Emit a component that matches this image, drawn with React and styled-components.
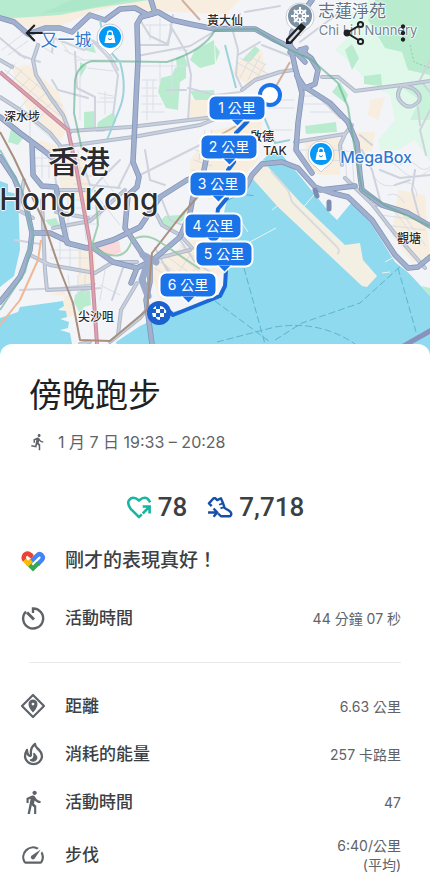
import styled, { createGlobalStyle } from "styled-components";
import {
    MdArrowBack,
    MdDirectionsRun,
    MdDirectionsWalk,
    MdMoreVert,
    MdOutlineSpeed
} from "react-icons/md";

const GlobalStyle = createGlobalStyle`
    * {
        box-sizing: border-box;
    }

    body {
        margin: 0;
        background: #fff;
        color: #202124;
        font-family: Inter, "Noto Sans CJK TC", sans-serif;
    }

    h1, p, dl, dd {
        margin: 0;
    }
`;

/* ---------- map ---------- */

const MapArea = styled.header`
    position: relative;
    width: 100%;
    aspect-ratio: 430 / 360;
    overflow: hidden;
    background: #f3f4f7;
`;

const MapSvg = styled.svg`
    display: block;
    width: 100%;
    height: 100%;
`;

const Pin = styled.div`
    position: absolute;
    left: ${props => props.$x / 4.3}%;
    top: ${props => props.$y / 3.6}%;
    transform: translate(-50%, -50%);
    white-space: nowrap;
`;

const PlaceName = styled(Pin)`
    font-size: ${props => props.$size || 12}px;
    line-height: 1;
    font-weight: ${props => props.$weight || 500};
    color: ${props => props.$color || "#2b2c30"};
    text-shadow: 1px 0 1px #fff, -1px 0 1px #fff, 0 1px 1px #fff, 0 -1px 1px #fff;
`;

const KmBadge = styled(Pin)`
    width: 59px;
    height: 27px;
    border: 2px solid #fff;
    border-radius: 8px;
    background: #1a73e8;
    color: #fff;
    font-size: 14px;
    line-height: 22px;
    text-align: center;

    &::after {
        content: "";
        position: absolute;
        left: 50%;
        top: 100%;
        transform: translateX(-50%);
        border: 6px solid transparent;
        border-top-color: #1a73e8;
        border-bottom: 0;
    }

    &::before {
        content: "";
        position: absolute;
        left: 50%;
        top: 100%;
        transform: translateX(-50%);
        border: 8px solid transparent;
        border-top-color: #fff;
        border-bottom: 0;
    }
`;

const AppBar = styled.nav`
    position: absolute;
    top: 0;
    left: 0;
    right: 0;
    display: flex;
    align-items: center;
    gap: 24px;
    height: 66px;
    padding: 0 13px 0 20px;
`;

const IconButton = styled.button`
    display: flex;
    align-items: center;
    justify-content: center;
    width: 28px;
    height: 28px;
    padding: 0;
    border: 0;
    background: none;
    color: #202124;
    font-size: 26px;
    cursor: pointer;

    &:first-child {
        margin-right: auto;
    }
`;

const highways = [
    "M0 18L14 22L28 34L45 28L60 28L72 32L90 15L105 20L120 9L135 8L148 15L158 12L172 20L190 24L215 29L255 29L275 40L292 48L305 62",
    "M151 0L155 13L141 17L137 24L138 60L136 100L133 162L139 177L137 187L128 195L125 228L143 255L150 265L150 282L146 300L152 344",
    "M312 0L303 12L292 32L290 43L295 67L302 93L298 123L296 150L312 173",
    "M300 50L311 58L318 70L315 84L305 88L297 76M305 87L330 103L348 122L357 143L360 175L362 190L382 205L408 213L430 226",
    "M244 190L252 175L262 164L282 162L298 168L315 187L332 193L348 197L372 220L395 255L408 268L418 267L430 257M320 190L355 186",
    "M0 157L14 178L27 210L32 233L30 250L20 277L0 302",
    "M0 117L20 133L43 150L55 160M32 143L33 175L42 186L56 187L62 220L67 243L87 248L113 240L140 227L160 197L187 180L197 177",
    "M33 233L50 233L67 241M92 247L113 262L137 268L153 260L180 237L190 213L193 197M137 268L131 283",
    "M202 180L206 160L213 142",
    "M215 29L238 28M300 50L306 48L304 53L290 52"
];

const avenues = [
    "M38 45L33 60L36 75L50 97L63 115L70 133",
    "M70 131L130 127L215 117L240 108",
    "M60 147L133 137L200 125L236 111",
    "M0 97L28 115L50 133L62 148",
    "M242 90L255 80L280 72L293 70M322 77L338 77L355 91L402 85L430 81",
    "M402 85Q394 96 402 103Q410 111 419 101Q422 94 412 88L402 85",
    "M295 142L345 134L352 125M345 134L340 145L342 165",
    "M30 255L50 265L95 273L113 262L137 262M42 200L45 270L47 290L90 288",
    "M53 228L90 221M90 221L125 190M56 212L88 218",
    "M345 178L372 204L396 235L425 268M372 204L382 205",
    "M80 344L90 342M110 342L140 318L148 308M137 283L121 310L118 335",
    "M0 60L12 67M157 215L162 225L180 235L192 248M150 260L190 250",
    "M58 190L88 190M33 218L18 210L24 180"
];

const streets = [
    "M52 52L54 38L84 50L95 42L110 60L118 75L115 100L113 115M75 52L77 88L95 97L95 130",
    "M52 80L58 90L88 98M140 20L150 36L167 44L172 30M170 25L186 52L191 75L188 120M137 56L190 46L215 31",
    "M188 88L215 95L240 92M167 90L186 90M100 40L95 44L113 62M137 45L168 45L173 15",
    "M82 38Q105 40 118 70M20 55L40 62M8 45L25 58M0 38L20 55M140 175L200 145L215 138",
    "M232 28L238 50L236 75L242 88M238 55L260 42M262 45L290 56M240 14L236 25M245 12L280 6M300 42L316 30L340 12",
    "M322 100L340 118M362 150L372 170L380 200M372 145L360 135M430 60L420 80L430 92M430 110L420 130L426 155",
    "M418 107L420 125M415 170L412 190L420 220M380 170L400 178L430 175M395 185L410 180",
    "M20 290L60 288L95 284M15 240L40 244M55 175L57 190M88 195L100 180L120 160",
    "M85 170L90 185L120 188M118 188L132 160M145 150L150 180L165 185M160 195L170 220L200 232",
    "M165 265L175 280L190 290M155 248L178 290M180 240L195 262L210 272M112 300L125 262M82 290L100 288"
];

const blocks = [
    "M75 60h38M88 68l25 3M98 93l15 3M80 70v50M100 98h14M97 102h17M105 92v22",
    "M142 80h15M142 88h15M142 96h15M142 104h20M147 80v40M153 80v30M142 112h22",
    "M145 25l22 0M150 25v15M160 18v26M178 50h10M172 60v35M160 63v20M140 66h50",
    "M3 78l12-14M10 84l12-14M18 90l12-12M26 96l12-12M34 103l12-10M43 110l10-8M5 70l55 46M12 64l50 42",
    "M20 108l8-9M28 116l8-9M36 122l8-9M10 102l50 44M2 50l20-15M8 55l20-14M30 140l0-20",
    "M78 150l8 90M72 160h18M73 168h18M74 176h18M74 184h18M75 192h18M75 200h18M76 208h18M76 216h18M77 224h18",
    "M35 150h20M35 158h20M35 166h20M42 150v28M49 150v28M60 190v40M68 190v45",
    "M60 240v20M70 245v25M80 250v25M50 250h45M50 258h40M78 275v20M85 275v20M68 275l4 30",
    "M100 285l20 10M105 270l-5 30M100 200l20 25M110 195l-14 30M104 180l16 20",
    "M236 62l28 16M240 58l28 16M246 55l20 10M240 78l12-24M248 80l12-24M255 80l10-16",
    "M155 268l30 20M160 262l30 20M165 255l30 22M172 250l28 22M180 245l24 20M170 285l20-30M182 290l20-32",
    "M300 96h24M304 104h26M310 112h25M270 100h24M268 108h26M270 130h22",
    "M330 150l25 2M330 160l28 2M345 150l2 35M352 150l2 35M300 150h40M318 140l2 20",
    "M365 165q20-12 35 4t30 0M375 178q8 12 24 6t18 12M400 165q8-8 16 0t14 2M388 195q10-4 16 8",
    "M205 130l-6 30M212 130l-6 30M196 150l18 6M194 160l18 6M192 170l20 5",
    "M20 32l34 22M60 40l10 14M64 50l20 10M390 205l30 40M400 210l25 35M380 215l40 5M385 225l40 5"
];

const ShopMarker = ({ x, y }) => (
    <g transform={`translate(${x} ${y})`}>
        <path d="M0 -13a13 13 0 0 1 13 13q0 9-8 13l-5 5l-5-5q-8-4-8-13a13 13 0 0 1 13-13z" fill="#fff" stroke="#c7ccd4" strokeWidth="1" />
        <circle r="11" fill="#0698f5" />
        <path d="M-4 -2h8l1.5 8h-11z" fill="#fff" />
        <path d="M-2.5 -2v-1.5a2.5 2.5 0 0 1 5 0v1.5" fill="none" stroke="#fff" strokeWidth="1.3" />
        <path d="M-2 1.5q2 2.5 4 0" stroke="#0698f5" fill="none" />
    </g>
);

const CityMap = () => (
    <MapSvg viewBox="0 0 430 360" preserveAspectRatio="xMidYMid slice" aria-hidden="true">
        <rect width="430" height="360" fill="#f3f4f7" />

        {/* built-up areas */}
        <g fill="#f8eedf">
            <path d="M0 20L0 12L80 7L150 0L240 0L225 14L150 11L120 5L90 13L60 26L28 28L14 20Z" />
            <path d="M12 68L28 65L58 92L70 125L60 140L30 118Z" />
            <path d="M33 148L55 150L62 200L92 200L86 160L68 150L40 140Z" />
            <path d="M240 60L262 50L266 76L245 84L232 72Z" />
            <path d="M190 100L212 100L212 122L188 122Z" />
            <path d="M190 160L214 130L262 120L258 160L240 180L210 200L190 190Z" />
            <path d="M150 270L190 240L205 225L222 225L225 270L200 290L160 300Z" />
            <path d="M48 295L72 296L74 315L60 320L66 290Z" />
            <path d="M305 140L340 138L340 175L318 175L305 162Z" />
            <path d="M398 190L425 195L430 260L412 262L392 235Z" />
            <path d="M78 245L95 250L95 285L78 285Z" />
            <path d="M355 132L375 132L372 152L360 150ZM370 100L385 97L378 120L368 115Z" />
        </g>

        {/* hills and parks */}
        <path d="M0 0L150 0L95 8L60 15L0 19Z" fill="#b6ebd0" />
        <path d="M72 0L130 0L80 10L40 14Z" fill="#9fe0c0" opacity="0.4" />
        <path d="M335 50L350 35L350 15L370 0L430 0L430 162L415 140L398 150L380 150L378 140L395 120L390 95L370 85L350 62Z" fill="#dff8ea" />
        <path d="M368 20L375 0L430 0L430 75L408 70L402 52L385 48L378 36Z" fill="#b9eccf" />
        <path d="M398 85L430 84L430 120L410 120L420 100Z" fill="#c8f2da" />
        <path d="M410 45L414 62L430 68" fill="none" stroke="#8fc9ab" strokeDasharray="2 2" />
        <g fill="#b9eccf">
            <path d="M161 78L172 75L175 68L186 64L186 78L180 82L178 110L166 108L158 92ZM176 58L184 55L188 65L178 78Z" />
            <path d="M195 50L214 40L215 64L200 68L190 60ZM190 91L214 90L215 100L195 100Z" />
            <path d="M84 112L95 111L94 130L84 130ZM98 122L114 112L116 122L104 132L96 132Z" />
            <path d="M84 50L93 44L96 53ZM80 62L87 66L80 78ZM12 125L25 135L18 145L8 142Z" />
            <path d="M75 295L82 289L90 291L91 305L84 307L80 314L74 302Z" />
            <path d="M158 223L165 216L180 215L186 208L184 220L172 226L166 230Z" />
            <path d="M305 126L336 122L337 132L306 134ZM345 50L352 44L359 58L352 70ZM364 76L381 74L382 86L364 84Z" />
            <path d="M242 60L255 46L260 50L250 62ZM215 45L220 52L216 62ZM332 92L340 82L348 95L345 103Z" />
            <path d="M45 220L56 218L60 226L50 226Z" />
        </g>
        <path d="M98 244L119 241L121 252L112 256L99 254Z" fill="#fbd9da" />

        {/* water */}
        <g fill="#8fdaee">
            <path d="M0 181L8 184L8 192L18 194L20 250L14 276L0 287Z" />
            <path d="M0 318L18 312L20 307L63 301L64 306L58 310L66 311L67 317L60 319L69 322L68 328L60 330L70 333L72 344L72 360L0 360Z" />
            <path d="M262 161L272 150L282 155L295 170L330 213L337 220L352 202L365 214L395 262L410 274L430 295L430 360L120 360L116 342L140 326L168 313L200 305L222 296L227 280L222 262L221 225L227 200L245 190Z" />
        </g>
        <path d="M408 272L418 270L430 280L430 296Z" fill="#f3f4f7" />
        <path d="M421 286L430 288L430 296Z" fill="#b9eccf" />
        <path d="M252 178L264 160L269 168L300 202L322 223L345 245L360 243L363 260L377 276L367 287L362 286L278 207Z" fill="#f3efe3" />
        <path d="M271 171L288 190L292 202L337 247Q341 252 337 254" fill="none" stroke="#dadbdd" strokeWidth="2" />
        <path d="M301 210L318 190M277 206L272 210M385 262L396 256M382 273L390 272M250 242L276 228M242 223L248 232" stroke="#e8f3f2" strokeWidth="1" fill="none" />
        <g fill="none" stroke="#59b6cf" strokeWidth="1" strokeDasharray="7 3">
            <path d="M244 268L265 344M215 301L270 342M217 342L275 327Q320 320 355 344M275 340L302 323L360 303L402 265M398 268L416 332M228 200L240 194L256 196" />
        </g>
        <path d="M402 344L430 328L430 334L412 344Z" fill="#8893bd" />

        {/* roads */}
        <g fill="none" strokeLinejoin="round" strokeLinecap="round">
            {blocks.map(d => <path key={d} d={d} stroke="#dadee7" strokeWidth="1" />)}
            {streets.map(d => <path key={d} d={d} stroke="#cfd3de" strokeWidth="2" />)}
            {avenues.map(d => <path key={d} d={d} stroke="#b0b9ca" strokeWidth="4" />)}
            {avenues.map(d => <path key={d} d={d} stroke="#c8cfdd" strokeWidth="2" />)}
            {highways.map(d => <path key={d} d={d} stroke="#8293b6" strokeWidth="5.5" />)}
            {highways.map(d => <path key={d} d={d} stroke="#a0b0ce" strokeWidth="4" />)}
            <path d="M315 190L317 196M329 202L329 209" stroke="#7b8db2" strokeWidth="5" />
            <path d="M148 262L142 280L148 296M143 255L156 262" stroke="#9aaaca" strokeWidth="7" />
        </g>

        {/* rail */}
        <g fill="none" strokeWidth="2" strokeLinejoin="round">
            <path d="M0 72L68 130L77 172L90 243L97 344" stroke="#c98a9d" strokeWidth="4" />
            <path d="M0 72L68 130L77 172L90 243L97 344" stroke="#d9a3b1" />
            <path d="M0 132L14 158L43 220L60 270L73 303L80 340L110 341L147 310L152 253L180 217L215 177" stroke="#a98f7d" />
            <path d="M182 0L200 20M290 62L275 88M250 118L222 134L200 155" stroke="#c8a08d" opacity="0.8" />
            <path d="M82 150L74 113L75 80Q78 65 92 61L167 62Q205 50 215 30L255 29L290 50L312 60L338 83L348 107L352 133L362 190L384 205L430 226" stroke="#5fae8c" opacity="0.6" />
            <path d="M95 190L98 225L92 245L97 250Q125 265 132 240Q145 232 160 242L200 269" stroke="#8fc5a0" opacity="0.8" />
            <path d="M100 20Q105 50 120 62Q128 90 119 110L107 140M225 45L236 88M262 112L275 143L290 140" stroke="#9bd2dc" />
            <path d="M41 240L38 260L20 300L0 325" stroke="#f1b795" />
            <path d="M0 310L25 272L33 235L22 190L0 150" stroke="#74b3ae" opacity="0.7" />
        </g>

        {/* tracked route */}
        <path
            d="M262 104L247 122L236 133L234 162L228 170L227 198L218 209L214 240L226 270L225 286L220 296L173 315L168 310"
            fill="none" stroke="#1a67d8" strokeWidth="4" strokeLinejoin="round"
        />
        <circle cx="270" cy="95" r="10" fill="#fff" stroke="#1a73e8" strokeWidth="4" />
        <circle cx="159" cy="313" r="12" fill="#1c62cf" />
        <path d="M153 309a7 7 0 0 1 3-3v3zM156 309h4v4h-4zM160 306q3 0 5 3h-5zM152 313h4v4h-3zM160 313h4v4h-4zM164 309h1q2 2 1 4h-2zM156 317h4v3q-3 0-4-2z" fill="#fff" />

        {/* place markers */}
        <ShopMarker x={110} y={37} />
        <ShopMarker x={321} y={154} />
        <path d="M300 3a14 14 0 0 1 14 14q0 9-9 13l-5 6l-5-6q-9-4-9-13a14 14 0 0 1 14-14z" fill="#fff" stroke="#c7ccd4" strokeWidth="1" />
        <circle cx="300" cy="16" r="12" fill="#7c91a3" />
        <g stroke="#fff" strokeWidth="2" fill="none">
            <circle cx="300" cy="16" r="6" strokeWidth="1.5" />
            <path d="M300 7v18M291 16h18M294 10l12 12M306 10l-12 12" />
        </g>
        <circle cx="300" cy="16" r="2" fill="#7c91a3" />
    </MapSvg>
);

const places = [
    { text: "又一城", x: 66, y: 40, size: 17, color: "#3178cf", weight: 400 },
    { text: "黃大仙", x: 225, y: 21 },
    { text: "志蓮淨苑", x: 352, y: 11, size: 17, color: "#5f7484", weight: 400 },
    { text: "Chi Lin Nunnery", x: 368, y: 30, size: 13, color: "#6f8291", weight: 400 },
    { text: "深水埗", x: 22, y: 117 },
    { text: "香港", x: 79, y: 161, size: 31 },
    { text: "Hong Kong", x: 79, y: 199, size: 30 },
    { text: "啟德", x: 262, y: 137 },
    { text: "TAK", x: 275, y: 151 },
    { text: "MegaBox", x: 376, y: 157, size: 16, color: "#3178cf" },
    { text: "觀塘", x: 409, y: 239 },
    { text: "尖沙咀", x: 96, y: 317 }
];

const kilometres = [
    { km: 4, x: 213, y: 226 },
    { km: 1, x: 237, y: 108 },
    { km: 2, x: 229, y: 147 },
    { km: 3, x: 218, y: 184 },
    { km: 5, x: 224, y: 254 },
    { km: 6, x: 188, y: 285 }
];

/* ---------- icons ---------- */

const EditIcon = () => (
    <svg width="28" height="28" viewBox="0 0 28 28" fill="none">
        <path d="M1 25V20L16 4L21 8L6 25Z" fill="currentColor" />
        <path d="M4 22L14 11" stroke="#d9dee6" strokeWidth="2.5" />
    </svg>
);

const ShareIcon = () => (
    <svg width="28" height="28" viewBox="0 0 28 28" fill="none" stroke="currentColor" strokeWidth="2">
        <path d="M23 6L10 14L23 22" />
        <circle cx="10" cy="14" r="2.4" fill="currentColor" />
        <circle cx="23.5" cy="5.5" r="2.6" fill="#cfeadc" />
        <circle cx="23.5" cy="22.5" r="2.6" fill="#e8f5ee" />
    </svg>
);

const HeartPointsIcon = () => (
    <svg width="26" height="24" viewBox="0 0 28 26" fill="none" stroke="#17b6a0" strokeWidth="2.8">
        <path d="M17 21L14 24L5 15Q1 10 3 6Q7 0 14 6Q21 0 25 6L26 8" strokeLinejoin="round" />
        <path d="M18 20L25 13M18 12.5H25.5V20" />
    </svg>
);

const StepsIcon = () => (
    <svg width="26" height="23" viewBox="0 0 28 25" fill="none" stroke="#174ea6" strokeWidth="2.6">
        <path d="M5 11L2 8L7 2.5H9L11 4.5L15 2.5L17 7L19 13L24 16Q28 19 25 22H15L12 19" strokeLinejoin="round" />
        <path d="M13 9.5L17 8M14.5 13.5L18.5 12" strokeWidth="2" />
        <path d="M1 18H10M7 13.5L11 18L7 22.5" />
    </svg>
);

const FitIcon = () => (
    <svg width="26" height="26" viewBox="0 0 26 26" fill="none" strokeWidth="4.4">
        <path d="M12 8L10 6.5Q7 4.5 4.8 6.8Q2.5 9.5 4.8 12.5" stroke="#ea4335" />
        <path d="M9.5 15L17 7.5Q19.5 5 21.8 7.2Q24 9.5 21.8 12L17.5 16.5" stroke="#4285f4" />
        <path d="M7.5 15L13 20.5L18.5 15" stroke="#34a853" />
        <path d="M4.5 12L8.2 15.7L11.5 12.5" stroke="#fbbc04" />
        <path d="M12.5 9L9 6.3" stroke="#ea4335" />
    </svg>
);

const TimerIcon = () => (
    <svg width="26" height="26" viewBox="0 0 26 26" fill="none" stroke="currentColor" strokeWidth="2.4">
        <path d="M13 8V3.5A10 10 0 1 1 6 6.5" />
        <path d="M7 7.5L14 14.5" strokeWidth="3" />
    </svg>
);

const DistanceIcon = () => (
    <svg width="26" height="26" viewBox="0 0 26 26">
        <path d="M13 2L24 13L13 24L2 13Z" fill="none" stroke="currentColor" strokeWidth="2.2" strokeLinejoin="round" />
        <path fillRule="evenodd" d="M13 6.5a4.5 4.5 0 0 1 4.5 4.5q0 4-4.5 8.5q-4.5-4.5-4.5-8.5a4.5 4.5 0 0 1 4.5-4.5zM13 9.7a1.4 1.4 0 0 0 0 2.8a1.4 1.4 0 0 0 0-2.8z" fill="currentColor" />
    </svg>
);

const FlameIcon = () => (
    <svg width="26" height="26" viewBox="0 0 26 26" fill="none" stroke="currentColor" strokeWidth="2.3" strokeLinejoin="round">
        <path d="M15 3Q10 7 11 13Q11 15 10 15Q7 14 7 9Q5 12 5 16A8.6 8.4 0 0 0 22 16Q22 11 17 7Q15 5 15 3Z" />
        <path d="M14 12.5Q18 16 16 18.5Q14 21 10.5 19Q15 18 14 12.5Z" fill="currentColor" strokeWidth="1.5" />
    </svg>
);

/* ---------- sheet ---------- */

const Sheet = styled.main`
    position: relative;
    margin-top: -16px;
    padding-top: 29px;
    border-radius: 12px 12px 0 0;
    background: #fff;
`;

const Title = styled.h1`
    padding: 0 29px;
    font-size: 33px;
    line-height: 44px;
    font-weight: 400;
`;

const DateLine = styled.p`
    display: flex;
    align-items: center;
    gap: 11px;
    margin-top: 13px;
    padding: 0 29px;
    color: #5f6368;
    font-size: 16px;
    line-height: 24px;

    svg {
        font-size: 18px;
    }
`;

const Metrics = styled.div`
    display: flex;
    justify-content: center;
    gap: 20px;
    margin-top: 37px;
`;

const Metric = styled.span`
    display: flex;
    align-items: center;
    gap: 6px;
    color: #3c4043;
    font-family: Roboto, sans-serif;
    font-size: 26px;
    line-height: 32px;
    font-weight: 500;
`;

const Row = styled.div`
    display: flex;
    align-items: center;
    min-height: 28px;
    padding: 0 29px 0 20px;
    color: #5f6368;
    font-size: 26px;
`;

const RowLabel = styled.dt`
    flex: 1;
    margin-left: 19px;
    color: #3c4043;
    font-size: 17px;
    line-height: 28px;
    font-weight: 500;
`;

const RowValue = styled.dd`
    font-size: 14px;
    line-height: 19px;
    text-align: right;
    white-space: pre-line;
`;

const Message = styled(Row).attrs({ as: "p" })`
    gap: 19px;
    margin-top: 24px;
    color: #3c4043;
    font-size: 19px;
    line-height: 28px;
    font-weight: 500;
`;

const Duration = styled.dl`
    margin-top: 29px;
`;

const Divider = styled.hr`
    margin: 30px 29px 29px;
    border: 0;
    border-top: 1px solid #e8eaed;
`;

const Stats = styled.dl`
    display: flex;
    flex-direction: column;
    gap: 20px;
`;

const stats = [
    { icon: <DistanceIcon />, label: "距離", value: "6.63 公里" },
    { icon: <FlameIcon />, label: "消耗的能量", value: "257 卡路里" },
    { icon: <MdDirectionsWalk />, label: "活動時間", value: "47" },
    { icon: <MdOutlineSpeed />, label: "步伐", value: "6:40/公里\n(平均)" }
];

const StatRow = ({ icon, label, value }) => (
    <Row>
        {icon}
        <RowLabel>{label}</RowLabel>
        <RowValue>{value}</RowValue>
    </Row>
);

const App = () => {
    return (
        <>
            <GlobalStyle />
            <MapArea>
                <CityMap />
                {places.map(({ text, x, y, size, color, weight }) => (
                    <PlaceName key={text} $x={x} $y={y} $size={size} $color={color} $weight={weight}>{text}</PlaceName>
                ))}
                {kilometres.map(({ km, x, y }) => (
                    <KmBadge key={km} $x={x} $y={y}>{km} 公里</KmBadge>
                ))}
                <AppBar>
                    <IconButton aria-label="返回"><MdArrowBack /></IconButton>
                    <IconButton aria-label="編輯"><EditIcon /></IconButton>
                    <IconButton aria-label="分享"><ShareIcon /></IconButton>
                    <IconButton aria-label="更多"><MdMoreVert /></IconButton>
                </AppBar>
            </MapArea>
            <Sheet>
                <Title>傍晚跑步</Title>
                <DateLine>
                    <MdDirectionsRun />
                    1 月 7 日 19:33 – 20:28
                </DateLine>
                <Metrics>
                    <Metric><HeartPointsIcon />78</Metric>
                    <Metric><StepsIcon />7,718</Metric>
                </Metrics>
                <Message>
                    <FitIcon />
                    剛才的表現真好！
                </Message>
                <Duration>
                    <StatRow icon={<TimerIcon />} label="活動時間" value="44 分鐘 07 秒" />
                </Duration>
                <Divider />
                <Stats>
                    {stats.map(stat => <StatRow key={stat.label} {...stat} />)}
                </Stats>
            </Sheet>
        </>
    );
};

export default App;
